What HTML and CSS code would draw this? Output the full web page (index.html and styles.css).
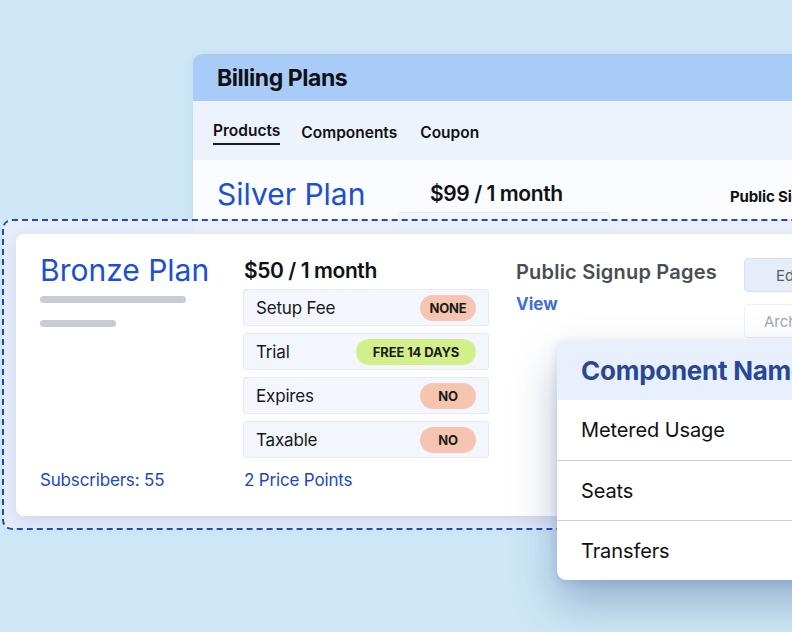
FILE: index.html
```html
<!DOCTYPE html>
<html>
<head>
<meta charset="utf-8">
<link rel="stylesheet" href="styles.css">
</head>
<body>
<div class="stage">
  <section class="back-window">
    <header class="bw-header"><h1 class="bw-title">Billing Plans</h1></header>
    <nav class="bw-tabs">
      <span class="tab tab-active">Products</span>
      <span class="tab">Components</span>
      <span class="tab">Coupon</span>
    </nav>
    <div class="bw-body">
      <div class="bw-col1"><span class="plan-name">Silver Plan</span></div>
      <div class="bw-col2">
        <span class="price">$99 / 1 month</span>
        <div class="bw-row"></div>
      </div>
      <div class="bw-col3"><span class="bw-public">Public Signup Pages</span></div>
    </div>
  </section>

  <section class="frame">
    <div class="card">
      <div class="col col-name">
        <span class="plan-name">Bronze Plan</span>
        <div class="bar bar-long"></div>
        <div class="bar bar-short"></div>
        <a class="link subs">Subscribers: 55</a>
      </div>
      <div class="col col-price">
        <span class="price">$50 / 1 month</span>
        <div class="rows">
          <div class="row"><span>Setup Fee</span><span class="badge badge-red">NONE</span></div>
          <div class="row"><span>Trial</span><span class="badge badge-green">FREE 14 DAYS</span></div>
          <div class="row"><span>Expires</span><span class="badge badge-red">NO</span></div>
          <div class="row"><span>Taxable</span><span class="badge badge-red">NO</span></div>
        </div>
        <a class="link points">2 Price Points</a>
      </div>
      <div class="col col-public">
        <span class="public-title">Public Signup Pages</span>
        <a class="view">View</a>
      </div>
      <div class="col col-actions">
        <span class="btn btn-edit">Edit</span>
        <span class="btn btn-archive">Archive</span>
      </div>
    </div>
  </section>

  <section class="components">
    <div class="comp-head">Component Name</div>
    <div class="comp-row">Metered Usage</div>
    <div class="comp-row">Seats</div>
    <div class="comp-row">Transfers</div>
  </section>
</div>
</body>
</html>
```

FILE: styles.css
```css
* { box-sizing: border-box; margin: 0; padding: 0; }
html, body { width: 792px; height: 632px; overflow: hidden; }
body {
  background: #cde7f6;
  font-family: Inter, "Noto Sans", "Liberation Sans", sans-serif;
  color: #15171c;
}
.stage { position: relative; width: 792px; height: 632px; overflow: hidden; }

/* back window */
.back-window {
  position: absolute; left: 193px; top: 54px; width: 720px; height: 260px;
  border-radius: 9px 0 0 0; overflow: hidden;
  background: #fafcff;
  box-shadow: 0 2px 10px rgba(80, 120, 170, 0.12);
}
.bw-header {
  height: 47px; background: #a9cbf7;
  display: flex; align-items: center; padding-left: 24px;
}
.bw-title { font-size: 23px; font-weight: 700; letter-spacing: -0.02em; color: #0f1115; }
.bw-tabs {
  height: 59px; background: #edf3fd;
  display: flex; align-items: center; gap: 23px; padding-left: 20px;
}
.tab { font-size: 15.5px; line-height: 18px; font-weight: 600; letter-spacing: 0; color: #111; padding-top: 4px; }
.tab-active { padding-top: 0; margin-top: 6px; padding-bottom: 3px; border-bottom: 2px solid #1b1d22; margin-right: -2px; }
.bw-body { display: flex; padding: 16px 0 0 24px; }
.bw-col1 { width: 213px; }
.bw-col2 { width: 300px; padding-top: 6px; display: flex; flex-direction: column; }
.bw-row { margin-top: 6px; margin-left: -32px; width: 212px; height: 30px; border: 1px solid #e4e9f2; border-radius: 3px; background: #f3f6fc; }
.bw-col3 { padding-top: 10px; }
.bw-public { font-size: 15px; font-weight: 700; letter-spacing: -0.01em; color: #111; }

.plan-name { font-size: 30px; line-height: 36px; font-weight: 400; color: #1a4fd6; letter-spacing: 0; }
.price { font-size: 21px; line-height: 24px; font-weight: 600; letter-spacing: -0.02em; color: #0f1115; }

/* dashed frame */
.frame {
  position: absolute; left: 2px; top: 219px; width: 900px; height: 311px;
  border: 2px dashed #2147cc; border-radius: 10px;
  background: rgba(232, 238, 251, 0.92);
  padding: 13px 0 0 12px;
}
.card {
  width: 880px; height: 282px; background: #fff; border-radius: 8px;
  box-shadow: 0 6px 16px rgba(90, 110, 160, 0.16);
  display: flex; padding: 18px 0 25px 24px;
}
.col { display: flex; flex-direction: column; }
.col-name { width: 203px; }
.bar { height: 7px; border-radius: 4px; background: #c7ccd3; }
.bar-long { width: 146px; margin-top: 8px; }
.bar-short { width: 76px; margin-top: 17px; }
.link { font-size: 17px; line-height: 22px; color: #1b48c4; letter-spacing: -0.01em; }
.subs { margin-top: auto; }
.col-price { width: 246px; padding-top: 7px; }
.col-price .price { padding-left: 1px; }
.rows { margin-top: 6px; display: flex; flex-direction: column; gap: 7px; }
.row {
  height: 37px; border: 1px solid #e4e9f2; border-radius: 3px; background: #f3f6fc;
  display: flex; align-items: center; justify-content: space-between;
  padding: 0 12px 0 12px; font-size: 17px; color: #16181d; letter-spacing: -0.01em;
}
.badge {
  height: 26px; border-radius: 13px; padding: 0 8px;
  display: flex; align-items: center; justify-content: center;
  font-size: 13px; font-weight: 700; letter-spacing: -0.01em; color: #1b1b1b;
}
.badge-red { background: #f6c5b1; min-width: 56px; }
.badge-green { background: #d3ef8b; width: 120px; }
.points { margin-top: auto; padding-left: 1px; }
.col-public { width: 228px; margin-left: 27px; padding-top: 8px; }
.public-title { font-size: 20px; line-height: 24px; font-weight: 600; letter-spacing: 0.01em; color: #4a4d55; }
.view { margin-top: 9px; font-size: 17px; line-height: 22px; font-weight: 700; color: #3d6fd6; }
.col-actions { padding-top: 6px; gap: 12px; }
.btn {
  width: 120px; height: 34px; border-radius: 4px; padding-left: 31px;
  display: flex; align-items: center; font-size: 15px;
}
.btn-edit { background: #e5edfb; border: 1px solid #d6e1f3; color: #5a5e66; }
.btn-archive { background: #fff; border: 1px solid #eceff4; color: #a3a7ae; padding-left: 19px; }

/* components table */
.components {
  position: absolute; left: 557px; top: 341px; width: 320px; height: 239px;
  background: #fff; border-radius: 9px 0 0 9px; overflow: hidden;
  box-shadow: 0 22px 44px rgba(40, 70, 130, 0.34), 0 2px 10px rgba(40, 70, 130, 0.14);
}
.comp-head {
  height: 59px; background: #e8f0fd; display: flex; align-items: center; padding-left: 24px;
  font-size: 26px; font-weight: 700; color: #2a4794; letter-spacing: -0.01em; white-space: nowrap;
}
.comp-row {
  height: 60px; display: flex; align-items: center; padding-left: 24px;
  font-size: 20px; color: #111; letter-spacing: -0.005em;
}
.comp-row + .comp-row { border-top: 1px solid #cdd1d7; }
```
